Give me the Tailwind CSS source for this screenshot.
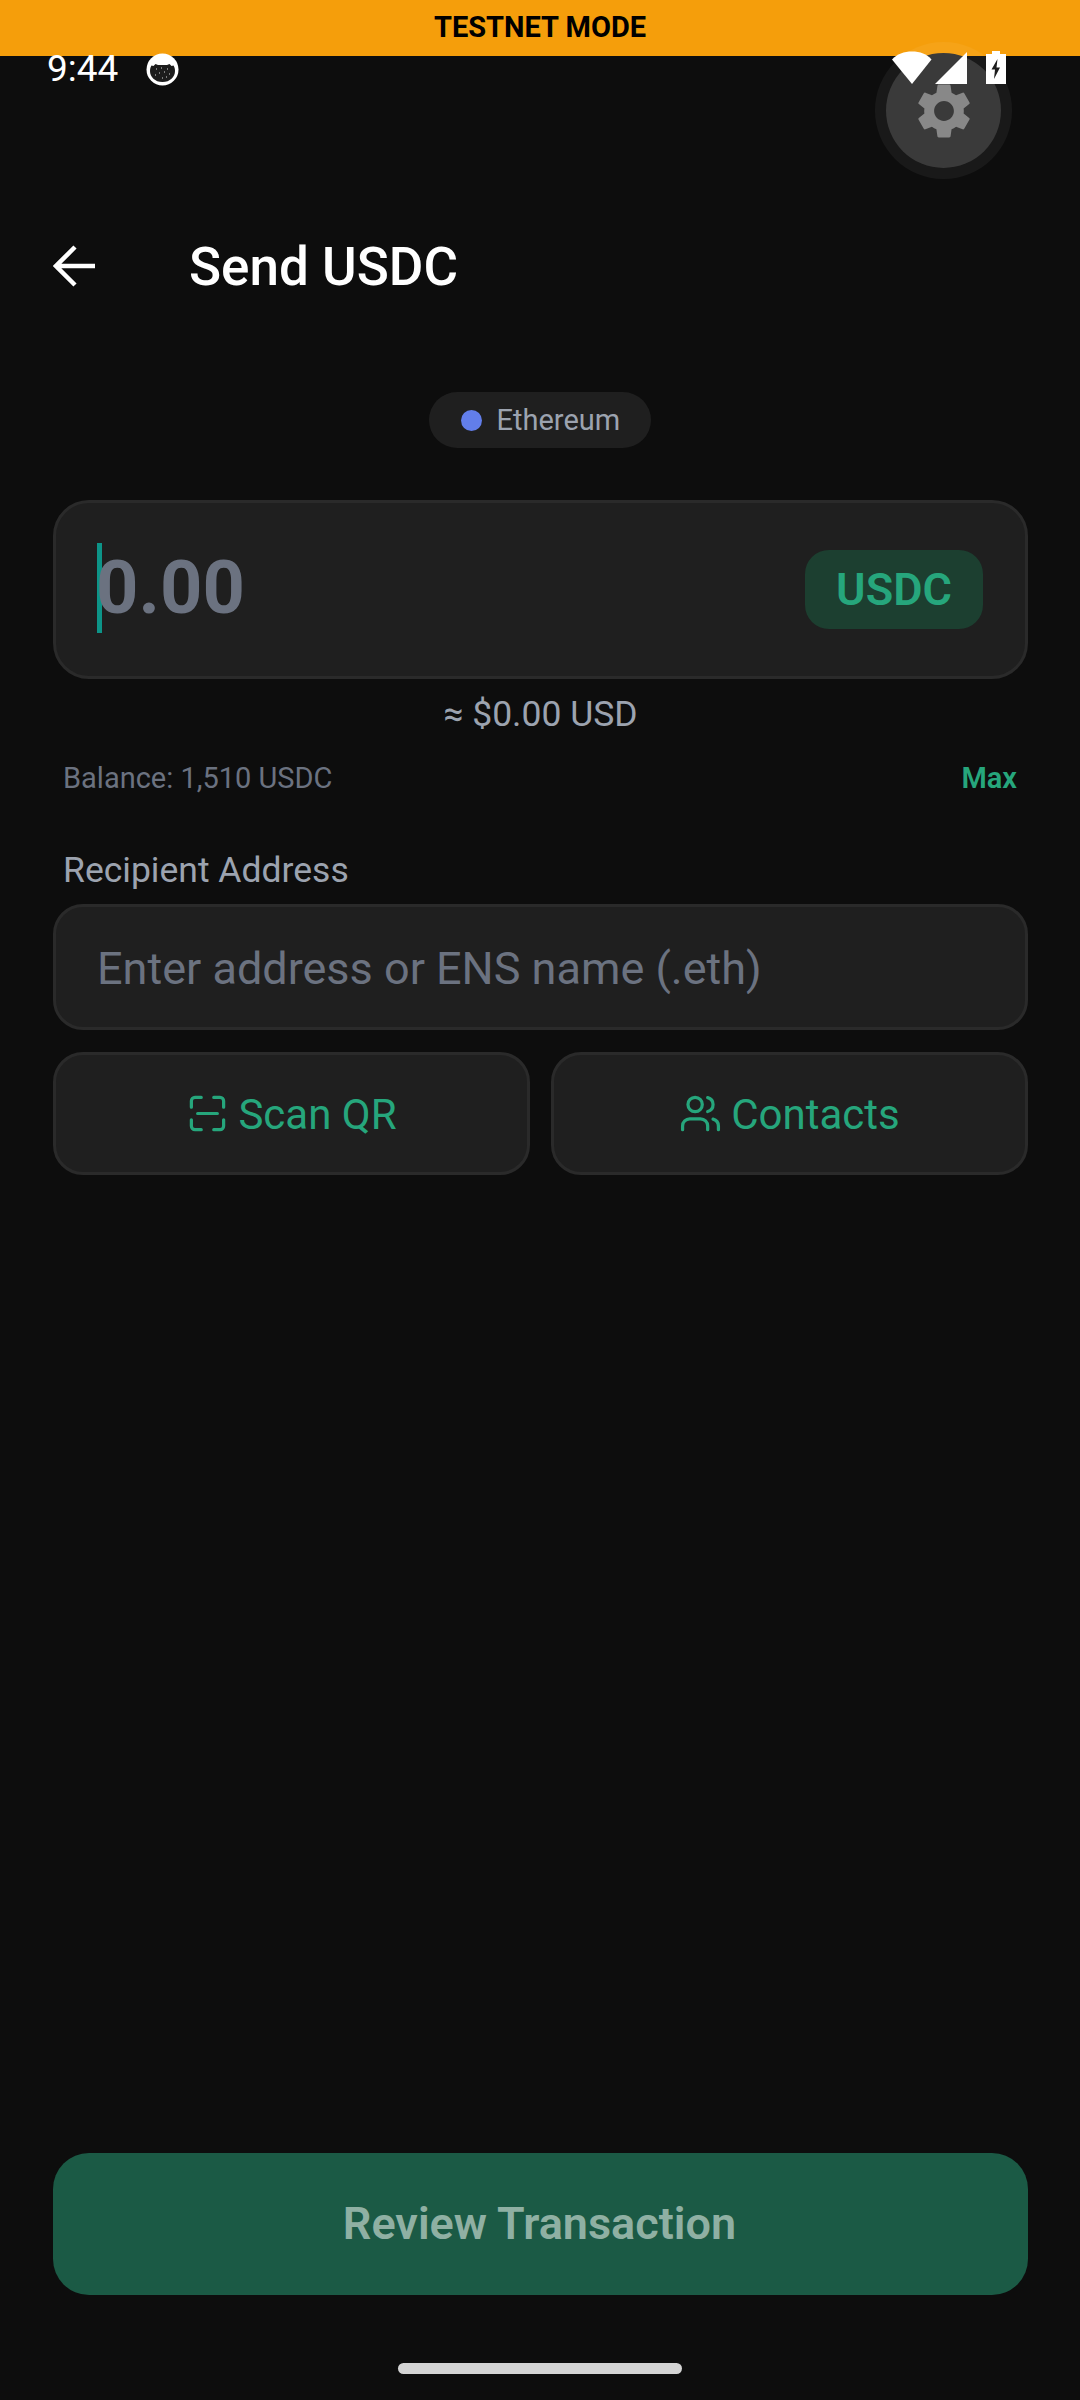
<!DOCTYPE html>
<html lang="en">
  <head>
    <meta charset="UTF-8" />
    <meta name="viewport" content="width=device-width, initial-scale=1.0" />
    <title>Send USDC</title>
    <script src="https://cdn.jsdelivr.net/npm/@tailwindcss/browser@4"></script>
  </head>
  <body class="bg-[#0d0d0d] font-['Roboto',sans-serif] text-white">
    <div class="relative flex h-[2400px] w-[1080px] flex-col overflow-hidden">
      <!-- testnet banner -->
      <div class="flex h-14 shrink-0 items-center justify-center bg-[#f59e0b] text-[29px] font-bold text-black">
        TESTNET MODE
      </div>

      <!-- status bar, sits over the banner -->
      <div class="absolute left-[47px] top-[47px] text-[37px] leading-[44px] text-white">9:44</div>
      <svg class="absolute left-[146px] top-[53px]" width="33" height="33" viewBox="0 0 33 33">
        <circle cx="16.5" cy="16.5" r="16" fill="#fff" />
        <path d="M4 18c0-2 .5-4 1.500-5.500l2 .5 2-2 2.500 1h9l2.500-1 2 2 2-.5c1 1.500 1.500 3.500 1.500 5.500 0 6-5 11-12.500 11S4 24 4 18z" fill="#1c1c1c" />
        <path d="M10 16h1M15 15h1M21 16h1M13 20h1M18 19h1M23 21h1M9 22h1M16 25h1M20 24h1" stroke="#999" stroke-width="1.500" />
      </svg>

      <!-- floating settings button -->
      <div class="absolute left-[875px] top-[42px] flex h-[137px] w-[137px] items-center justify-center rounded-full bg-white/5">
        <div class="flex h-[115px] w-[115px] items-center justify-center rounded-full bg-[#3a3a3a]">
          <svg width="66" height="66" viewBox="0 0 24 24" fill="#888888">
            <path d="M19.140 12.940c.040-.300.060-.610.060-.940 0-.320-.020-.640-.070-.940l2.030-1.580a.49.49 0 0 0 .120-.610l-1.920-3.320a.488.488 0 0 0-.590-.220l-2.390.960c-.500-.380-1.030-.700-1.620-.940l-.360-2.540a.484.484 0 0 0-.480-.410h-3.840c-.240 0-.430.170-.470.410l-.360 2.540c-.590.240-1.130.570-1.620.940l-2.390-.960c-.220-.080-.470 0-.590.220L2.740 8.870c-.120.210-.080.470.120.610l2.030 1.580c-.050.300-.090.630-.090.940s.020.640.070.940l-2.030 1.580a.49.49 0 0 0-.120.610l1.920 3.320c.120.220.370.290.590.220l2.390-.960c.500.380 1.030.700 1.620.940l.360 2.540c.050.240.240.410.480.410h3.840c.240 0 .440-.170.470-.410l.360-2.540c.590-.240 1.130-.560 1.620-.940l2.390.960c.220.080.470 0 .590-.220l1.920-3.320c.120-.220.070-.470-.120-.610l-2.010-1.580zM12 15.600c-1.980 0-3.600-1.620-3.600-3.600s1.620-3.600 3.600-3.600 3.600 1.620 3.600 3.600-1.620 3.600-3.600 3.600z" />
          </svg>
        </div>
      </div>

      <svg class="absolute left-[892px] top-[51px]" width="40" height="33" viewBox="0 0 40 33" fill="#fff">
        <path d="M20 33 0 8.500C5 3 12 0.500 20 0.500S35 3 39.500 8.500z" />
      </svg>
      <svg class="absolute left-[934px] top-[51px]" width="34" height="34" viewBox="0 0 34 34" fill="#fff">
        <path d="M33 1v32H1z" />
      </svg>
      <svg class="absolute left-[986px] top-[51px]" width="20" height="33" viewBox="0 0 20 33">
        <path d="M6 0h8v3h6v30H0V3h6z" fill="#fff" />
        <path d="M11.500 8 5.500 18.500h3.500L8 28l6-11.500h-3.500z" fill="#1c1c1c" />
      </svg>

      <!-- header -->
      <header class="mt-[154px] flex h-[112px] shrink-0 items-center pl-[53px]">
        <svg width="44" height="44" viewBox="0 0 44 44" fill="none" stroke="#fff" stroke-width="4.500">
          <path d="M42 22H4M22 3 3 22l19 19" />
        </svg>
        <h1 class="ml-[92px] mt-1 text-[53px] font-medium">Send USDC</h1>
      </header>

      <main class="flex flex-1 flex-col pl-[53px] pr-[52px]">
        <!-- network pill -->
        <div class="mr-[2px] mt-[70px] flex h-14 w-[222px] items-center self-center rounded-full bg-[#1f1f1f] pl-[32px]">
          <span class="h-[21px] w-[21px] rounded-full bg-[#627eea]"></span>
          <span class="ml-[15px] mt-[1px] text-[29px] text-[#9ca3af]">Ethereum</span>
        </div>

        <!-- amount -->
        <div class="mt-[52px] flex h-[179px] items-center justify-between rounded-[36px] border-[3px] border-[#2a2a2a] bg-[#1f1f1f] pl-[41px] pr-[42px]">
          <div class="flex items-center">
            <span class="-mt-1 h-[90px] w-[5px] bg-[#0d9488]"></span>
            <span class="-ml-[6px] -mt-1 text-[74px] font-bold text-[#6b7280]">0.00</span>
          </div>
          <span class="flex h-[79px] w-[178px] items-center justify-center rounded-[24px] bg-[#1c3f30] text-[45px] font-semibold text-[#26a67c]">USDC</span>
        </div>

        <p class="mt-[14px] text-center text-[35.5px] leading-[42px] text-[#9ca3af]">≈ $0.00 USD</p>

        <div class="mt-[25px] flex items-center justify-between pl-[10px] pr-[11px] text-[29px] leading-[36px]">
          <span class="text-[#6b7280]">Balance: 1,510 USDC</span>
          <span class="font-semibold text-[#26a67c]">Max</span>
        </div>

        <!-- recipient -->
        <label class="mt-[54px] pl-[10px] text-[35.5px] leading-[40px] text-[#9ca3af]">Recipient Address</label>
        <div class="mt-[14px] flex h-[126px] items-center rounded-[30px] border-[3px] border-[#2a2a2a] bg-[#1f1f1f] pl-[41px] pt-[3px] text-[45px] text-[#6b7280]">
          Enter address or ENS name (.eth)
        </div>

        <div class="mt-[22px] grid grid-cols-2 gap-[21px]">
          <button class="flex h-[123px] items-center justify-center gap-[9px] rounded-[30px] border-[3px] border-[#2a2a2a] bg-[#1f1f1f] text-[42px] text-[#26a67c]">
            <svg width="43" height="43" viewBox="0 0 24 24" fill="none" stroke="currentColor" stroke-width="1.800" stroke-linecap="round" stroke-linejoin="round">
              <path d="M3 8.500V5a2 2 0 0 1 2-2h3.500M15.500 3H19a2 2 0 0 1 2 2v3.500M21 15.500V19a2 2 0 0 1-2 2h-3.500M8.500 21H5a2 2 0 0 1-2-2v-3.500M6.500 12h11" />
            </svg>
            <span class="mt-[2px]">Scan QR</span>
          </button>
          <button class="flex h-[123px] items-center justify-center gap-[9px] rounded-[30px] border-[3px] border-[#2a2a2a] bg-[#1f1f1f] text-[42px] text-[#26a67c]">
            <svg width="43" height="43" viewBox="0 0 24 24" fill="none" stroke="currentColor" stroke-width="1.800" stroke-linecap="round" stroke-linejoin="round">
              <path d="M16 21v-2a4 4 0 0 0-4-4H6a4 4 0 0 0-4 4v2" />
              <circle cx="9" cy="7" r="4" />
              <path d="M22 21v-2a4 4 0 0 0-3-3.870M16 3.130a4 4 0 0 1 0 7.750" />
            </svg>
            <span class="mt-[2px]">Contacts</span>
          </button>
        </div>

        <button class="mt-auto flex h-[142px] items-center justify-center rounded-[36px] bg-[#1b5a45] pr-[2px] text-[45px] font-semibold text-[#8fb0a3]">
          Review Transaction
        </button>

        <!-- gesture bar -->
        <div class="mb-[26px] mr-[2px] mt-[68px] h-[11px] w-[284px] self-center rounded-full bg-[#d4d4d4]"></div>
      </main>
    </div>
  </body>
</html>
